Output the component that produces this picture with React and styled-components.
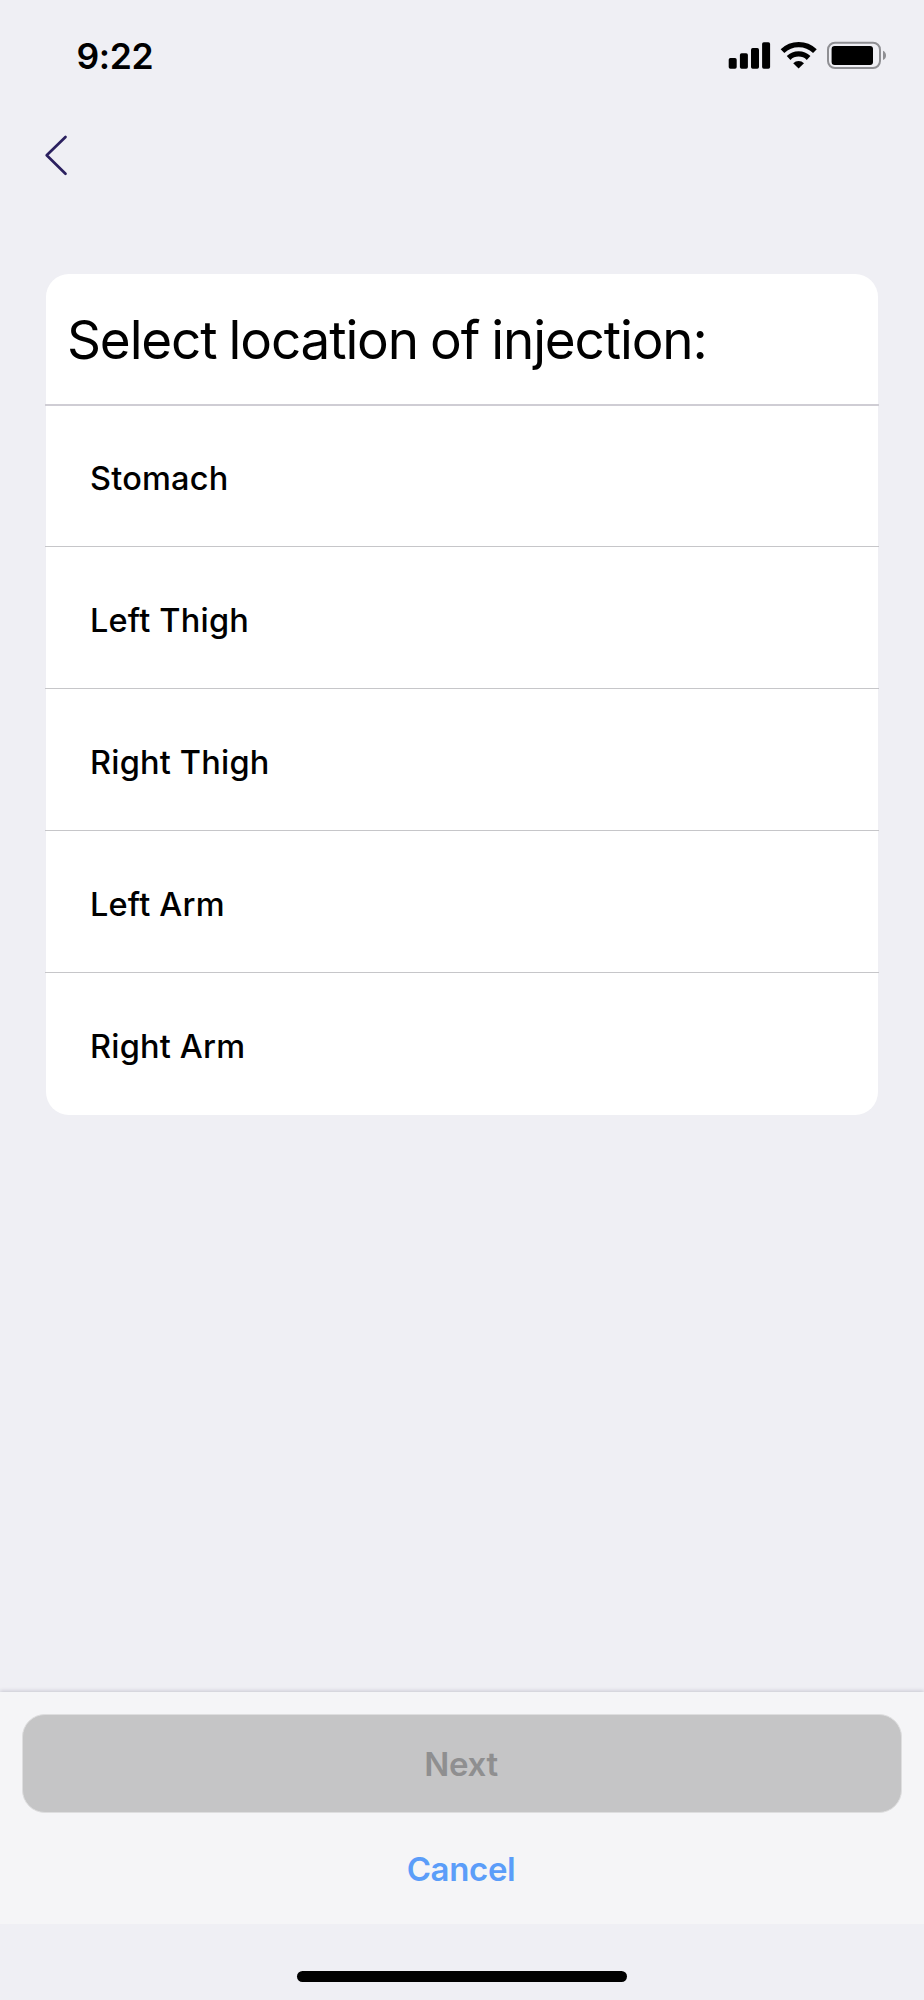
import React from "react";
import styled, { createGlobalStyle } from "styled-components";

const GlobalStyle = createGlobalStyle`
  *, *::before, *::after { box-sizing: border-box; }
  body { margin: 0; background: #efeff4; }
  button { font: inherit; border: 0; background: none; padding: 0; margin: 0; }
`;

const Screen = styled.div`
  width: 924px;
  height: 2000px;
  display: flex;
  flex-direction: column;
  overflow: hidden;
  background: #efeff4;
  color: #000;
  font-family: Inter, "Liberation Sans", sans-serif;
`;

const StatusBar = styled.header`
  flex: none;
  height: 112px;
  display: flex;
  justify-content: space-between;
  padding: 0 36px 0 76.5px;
`;

const Time = styled.time`
  padding-top: 35px;
  font-size: 35.5px;
  line-height: 44px;
  font-weight: 600;
  letter-spacing: -0.4px;
`;

const StatusIcons = styled.svg`
  display: block;
  margin-top: 36px;
`;

const NavBar = styled.nav`
  flex: none;
  height: 162px;
  padding: 20px 0 0 41px;
`;

const BackButton = styled.button`
  display: block;
  height: 48px;
`;

const Card = styled.section`
  flex: none;
  height: 841px;
  margin: 0 45px;
  display: flex;
  flex-direction: column;
`;

const CardHeader = styled.div`
  height: 130px;
  margin: 0 1px;
  padding: 34px 0 0 21px;
  background: #fff;
  border-radius: 23px 23px 0 0;
`;

const Title = styled.h1`
  margin: 0;
  font-size: 53px;
  line-height: 64px;
  font-weight: 400;
  letter-spacing: -1.13px;
  word-spacing: -1.7px;
  white-space: nowrap;
`;

const OptionList = styled.ul`
  list-style: none;
  margin: 0;
  padding: 0;
`;

const Option = styled.li`
  height: ${(p) => (p.$last ? 143 : 142)}px;
  border-top: ${(p) => (p.$first ? 2 : 1)}px solid ${(p) => (p.$first ? "#cfcdd4" : "#c6c6c9")};
`;

const OptionButton = styled.button`
  display: flex;
  align-items: center;
  width: 832px;
  height: 100%;
  margin: 0 1px;
  padding: ${(p) => (p.$middle ? 7 : 5)}px 0 0 44px;
  background: #fff;
  border-radius: ${(p) => (p.$last ? "0 0 23px 23px" : "0")};
  font-size: 32.5px;
  line-height: 40px;
  font-weight: 500;
  letter-spacing: 0.2px;
  text-align: left;
  color: #000;
`;

const Footer = styled.footer`
  flex: none;
  height: 232px;
  margin-top: auto;
  padding: 22px 22px 0;
  display: flex;
  flex-direction: column;
  background: #f5f5f7;
  box-shadow: 0 -1px 4px rgba(60, 55, 80, 0.22);
  clip-path: inset(-8px 0 0 0);
`;

const Action = styled.button`
  height: ${(p) => (p.$primary ? 99 : 111)}px;
  padding-right: 2px;
  border: ${(p) => (p.$primary ? "1px solid #dededf" : "0")};
  border-radius: 23px;
  background: ${(p) => (p.$primary ? "#c5c5c6" : "transparent")};
  color: ${(p) => (p.$primary ? "#8f8f90" : "#5b9df9")};
  font-size: 33px;
  line-height: 40px;
  font-weight: 600;
  letter-spacing: -0.35px;
`;

const HomeArea = styled.div`
  flex: none;
  height: 76px;
  padding-top: 47px;
  display: flex;
  justify-content: center;
`;

const HomeIndicator = styled.div`
  width: 330px;
  height: 11px;
  border-radius: 6px;
  background: #000;
`;

const locations = ["Stomach", "Left Thigh", "Right Thigh", "Left Arm", "Right Arm"];

function Status() {
  return (
    <StatusIcons width="164" height="40" viewBox="724 36 164 40" role="img" aria-label="Signal, Wi-Fi, battery">
      <rect x="728.7" y="58" width="8" height="10.7" rx="1.7" />
      <rect x="739.9" y="53.3" width="8" height="15.4" rx="1.7" />
      <rect x="751" y="48.1" width="8" height="20.6" rx="1.7" />
      <rect x="762.1" y="42.2" width="8" height="26.5" rx="1.7" />
      <g fill="none" stroke="#000" strokeWidth="5.3">
        <path d="M782.5 51.2 A23.3 23.3 0 0 1 814.9 51.2" />
        <path d="M788.6 58 A14.4 14.4 0 0 1 808.6 58" />
      </g>
      <path d="M798.6 68.4 L793.2 63.2 A8 8 0 0 1 804 63.2 Z" />
      <rect x="828" y="42.7" width="52" height="25.4" rx="7" fill="none" stroke="#8f8f93" strokeWidth="2" />
      <rect x="831.6" y="46" width="41.4" height="19" rx="3" />
      <path d="M883 50.7 C887 52.3 887 58.5 883 60.1 Z" fill="#8f8f93" />
    </StatusIcons>
  );
}

export default function App() {
  const last = locations.length - 1;
  return (
    <>
      <GlobalStyle />
      <Screen>
        <StatusBar>
          <Time>9:22</Time>
          <Status />
        </StatusBar>
        <NavBar>
          <BackButton aria-label="Back">
            <svg width="32" height="48" viewBox="41 132 32 48" fill="none" stroke="#2b205f" strokeWidth="2.7" strokeLinecap="round" strokeLinejoin="round">
              <path d="M65.5 137 L46.7 155.3 L65.5 173.7" />
            </svg>
          </BackButton>
        </NavBar>
        <Card>
          <CardHeader>
            <Title>Select location of injection:</Title>
          </CardHeader>
          <OptionList>
            {locations.map((name, i) => (
              <Option key={name} $first={i === 0} $last={i === last}>
                <OptionButton $middle={i > 0 && i < last} $last={i === last}>{name}</OptionButton>
              </Option>
            ))}
          </OptionList>
        </Card>
        <Footer>
          <Action $primary disabled>Next</Action>
          <Action>Cancel</Action>
        </Footer>
        <HomeArea>
          <HomeIndicator />
        </HomeArea>
      </Screen>
    </>
  );
}
